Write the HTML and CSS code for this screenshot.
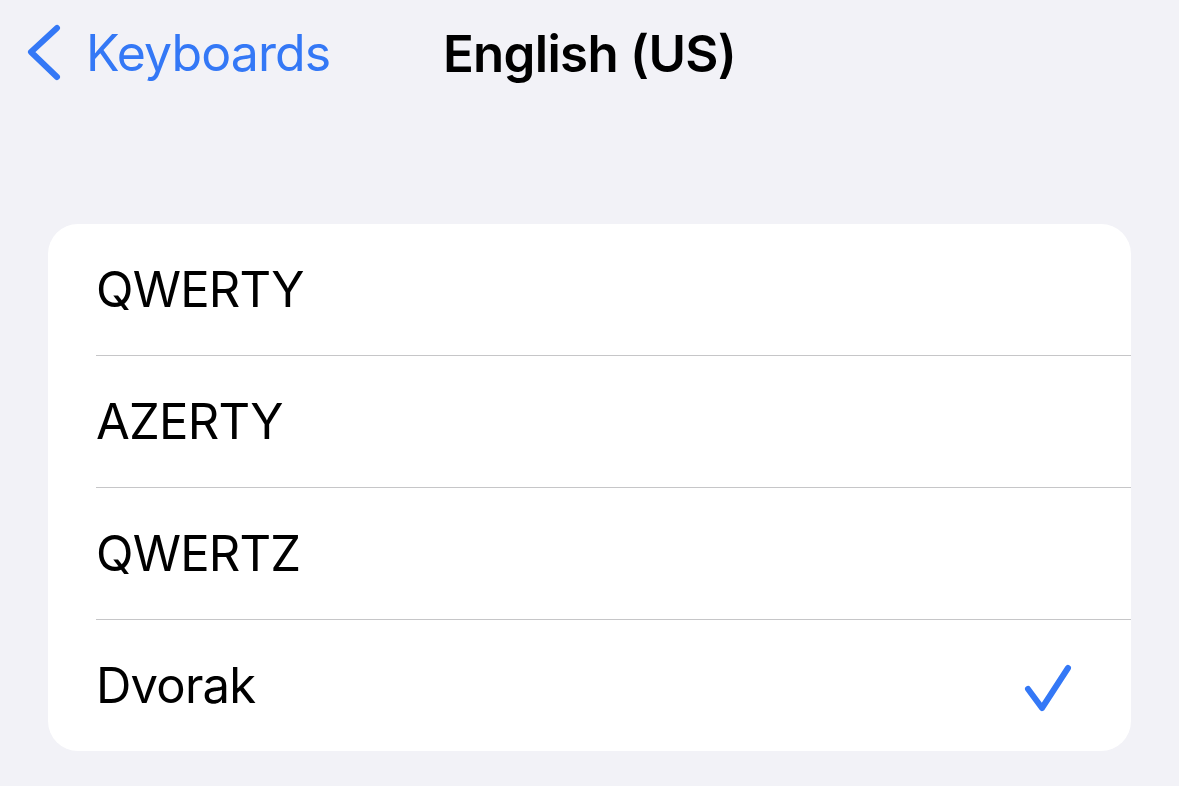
FILE: index.html
```html
<!DOCTYPE html>
<html lang="en">
<head>
    <meta charset="UTF-8">
    <meta name="viewport" content="width=device-width, initial-scale=1.0">
    <title>English (US)</title>
    <link rel="stylesheet" href="styles.css">
</head>
<body>
    <div class="header">
        <div class="back">
            <svg class="chevron" width="36" height="58" viewBox="0 0 36 58">
                <polyline points="31,4 5,28 31,53" fill="none" stroke="#3478f6" stroke-width="6" stroke-linecap="round" stroke-linejoin="round"/>
            </svg>
            <span>Keyboards</span>
        </div>
        <div class="title">English (US)</div>
        <div></div>
    </div>

    <div class="card">
        <div class="row"><div class="row-inner">QWERTY</div></div>
        <div class="row"><div class="row-inner">AZERTY</div></div>
        <div class="row"><div class="row-inner">QWERTZ</div></div>
        <div class="row last">
            <div class="row-inner">
                Dvorak
                <svg class="check" width="48" height="48" viewBox="0 0 48 48">
                    <polyline points="4,25 18,44 44,4" fill="none" stroke="#3478f6" stroke-width="6" stroke-linecap="round" stroke-linejoin="round"/>
                </svg>
            </div>
        </div>
    </div>
</body>
</html>
```

FILE: styles.css
```css
* {
    margin: 0;
    padding: 0;
    box-sizing: border-box;
}
body {
    font-family: Inter, "Noto Sans", sans-serif;
    background-color: #f2f2f7;
    color: #000;
}
.header {
    display: grid;
    grid-template-columns: 1fr auto 1fr;
    align-items: center;
    height: 106px;
}
.back {
    display: flex;
    align-items: center;
    gap: 24px;
    padding-left: 26px;
    color: #3478f6;
    font-size: 50px;
    letter-spacing: -0.9px;
}
.title {
    font-size: 51px;
    font-weight: 600;
    letter-spacing: -0.7px;
}
.card {
    background: #fff;
    border-radius: 30px;
    margin: 118px 48px 0;
    overflow: hidden;
}
.row {
    padding-left: 48px;
}
.row-inner {
    display: flex;
    align-items: center;
    justify-content: space-between;
    height: 132px;
    padding-right: 59px;
    border-bottom: 1px solid #c6c6c8;
    font-size: 49px;
    letter-spacing: -0.8px;
}
.row.last .row-inner {
    border-bottom: none;
    height: 131px;
}
.check {
    margin-top: 4px;
}
```
